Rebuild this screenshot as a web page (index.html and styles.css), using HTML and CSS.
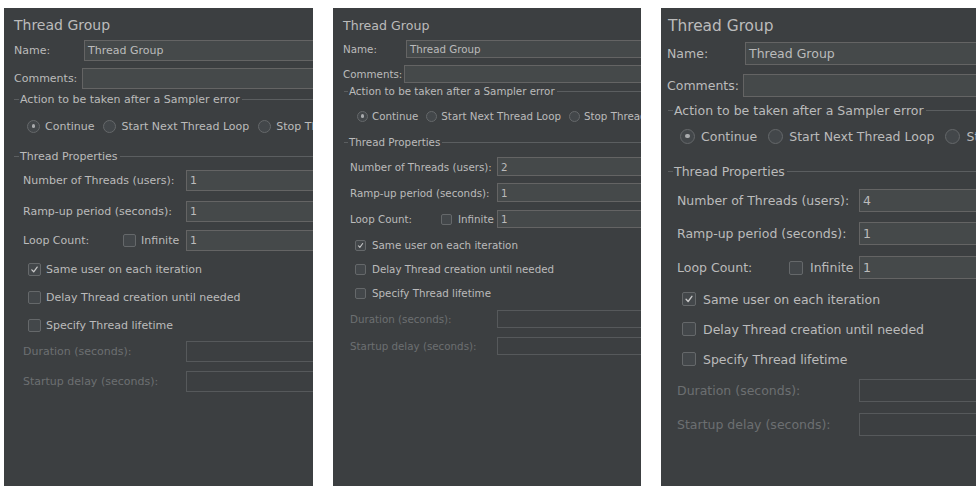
FILE: index.html
```html
<!DOCTYPE html>
<html>
<head>
<meta charset="utf-8">
<title>Thread Group</title>
<link rel="stylesheet" href="styles.css">
</head>
<body>
<section class="panel p1">
  <div class="title">Thread Group</div>
  <div class="row r-name"><span class="lbl lbl-name">Name:</span><div class="field">Thread Group</div></div>
  <div class="row r-comm"><span class="lbl lbl-comm">Comments:</span><div class="field"></div></div>
  <div class="hdr h-action"><i class="tick"></i><span class="hdr-text">Action to be taken after a Sampler error</span><i class="rule"></i></div>
  <div class="radios">
    <span class="opt"><span class="radio on"></span>Continue</span>
    <span class="opt"><span class="radio"></span>Start Next Thread Loop</span>
    <span class="opt"><span class="radio"></span>Stop Thread</span>
  </div>
  <div class="hdr h-props"><i class="tick"></i><span class="hdr-text">Thread Properties</span><i class="rule"></i></div>
  <div class="row prow r-num"><span class="lbl lbl-prop">Number of Threads (users):</span><div class="field">1</div></div>
  <div class="row prow r-ramp"><span class="lbl lbl-prop">Ramp-up period (seconds):</span><div class="field">1</div></div>
  <div class="row prow r-loop"><span class="lbl lbl-loop">Loop Count:</span><span class="inf"><span class="cb"></span>Infinite</span><div class="field">1</div></div>
  <div class="check r-same"><span class="cb"><svg viewBox="0 0 14 14"><path d="M3.6 7.4 L6 9.9 L10.4 3.9" fill="none" stroke="#c8c8c8" stroke-width="1.6" stroke-linecap="round" stroke-linejoin="round"/></svg></span>Same user on each iteration</div>
  <div class="check r-delay"><span class="cb"></span>Delay Thread creation until needed</div>
  <div class="check r-spec"><span class="cb"></span>Specify Thread lifetime</div>
  <div class="row prow dis r-dur"><span class="lbl lbl-prop">Duration (seconds):</span><div class="field"></div></div>
  <div class="row prow dis r-start"><span class="lbl lbl-prop">Startup delay (seconds):</span><div class="field"></div></div>
</section>

<section class="panel p2">
  <div class="title">Thread Group</div>
  <div class="row r-name"><span class="lbl lbl-name">Name:</span><div class="field">Thread Group</div></div>
  <div class="row r-comm"><span class="lbl lbl-comm">Comments:</span><div class="field"></div></div>
  <div class="hdr h-action"><i class="tick"></i><span class="hdr-text">Action to be taken after a Sampler error</span><i class="rule"></i></div>
  <div class="radios">
    <span class="opt"><span class="radio on"></span>Continue</span>
    <span class="opt"><span class="radio"></span>Start Next Thread Loop</span>
    <span class="opt"><span class="radio"></span>Stop Thread</span>
  </div>
  <div class="hdr h-props"><i class="tick"></i><span class="hdr-text">Thread Properties</span><i class="rule"></i></div>
  <div class="row prow r-num"><span class="lbl lbl-prop">Number of Threads (users):</span><div class="field">2</div></div>
  <div class="row prow r-ramp"><span class="lbl lbl-prop">Ramp-up period (seconds):</span><div class="field">1</div></div>
  <div class="row prow r-loop"><span class="lbl lbl-loop">Loop Count:</span><span class="inf"><span class="cb"></span>Infinite</span><div class="field">1</div></div>
  <div class="check r-same"><span class="cb"><svg viewBox="0 0 14 14"><path d="M3.6 7.4 L6 9.9 L10.4 3.9" fill="none" stroke="#c8c8c8" stroke-width="1.6" stroke-linecap="round" stroke-linejoin="round"/></svg></span>Same user on each iteration</div>
  <div class="check r-delay"><span class="cb"></span>Delay Thread creation until needed</div>
  <div class="check r-spec"><span class="cb"></span>Specify Thread lifetime</div>
  <div class="row prow dis r-dur"><span class="lbl lbl-prop">Duration (seconds):</span><div class="field"></div></div>
  <div class="row prow dis r-start"><span class="lbl lbl-prop">Startup delay (seconds):</span><div class="field"></div></div>
</section>

<section class="panel p3">
  <div class="title">Thread Group</div>
  <div class="row r-name"><span class="lbl lbl-name">Name:</span><div class="field">Thread Group</div></div>
  <div class="row r-comm"><span class="lbl lbl-comm">Comments:</span><div class="field"></div></div>
  <div class="hdr h-action"><i class="tick"></i><span class="hdr-text">Action to be taken after a Sampler error</span><i class="rule"></i></div>
  <div class="radios">
    <span class="opt"><span class="radio on"></span>Continue</span>
    <span class="opt"><span class="radio"></span>Start Next Thread Loop</span>
    <span class="opt"><span class="radio"></span>Stop Thread</span>
  </div>
  <div class="hdr h-props"><i class="tick"></i><span class="hdr-text">Thread Properties</span><i class="rule"></i></div>
  <div class="row prow r-num"><span class="lbl lbl-prop">Number of Threads (users):</span><div class="field">4</div></div>
  <div class="row prow r-ramp"><span class="lbl lbl-prop">Ramp-up period (seconds):</span><div class="field">1</div></div>
  <div class="row prow r-loop"><span class="lbl lbl-loop">Loop Count:</span><span class="inf"><span class="cb"></span>Infinite</span><div class="field">1</div></div>
  <div class="check r-same"><span class="cb"><svg viewBox="0 0 14 14"><path d="M3.6 7.4 L6 9.9 L10.4 3.9" fill="none" stroke="#c8c8c8" stroke-width="1.6" stroke-linecap="round" stroke-linejoin="round"/></svg></span>Same user on each iteration</div>
  <div class="check r-delay"><span class="cb"></span>Delay Thread creation until needed</div>
  <div class="check r-spec"><span class="cb"></span>Specify Thread lifetime</div>
  <div class="row prow dis r-dur"><span class="lbl lbl-prop">Duration (seconds):</span><div class="field"></div></div>
  <div class="row prow dis r-start"><span class="lbl lbl-prop">Startup delay (seconds):</span><div class="field"></div></div>
</section>
</body>
</html>
```
FILE: styles.css
```css
html, body {
  margin: 0;
  padding: 0;
  background: #ffffff;
}
body {
  display: flex;
  align-items: flex-start;
  gap: 20px;
  padding-left: 4px;
  height: 486px;
  overflow: hidden;
}

.panel {
  flex: none;
  box-sizing: border-box;
  height: 478px;
  margin-top: 8px;
  background: #3c3f41;
  color: #bbbbbb;
  font-family: "DejaVu Sans", "Noto Sans", sans-serif;
  font-size: var(--fs);
  padding-top: var(--pt);
  overflow: hidden;
}

/* ---- per-panel metrics ---- */
.p1 {
  width: 309px;
  --fs: 11px; --tfs: 14px; --th: 16px; --pt: 9px; --tx: 10px;
  --lx: 10px; --lwn: 70px; --lwc: 68px;
  --hx: 10px; --tk: 5px; --hh: 14px;
  --rx: 23px; --rg: 9px; --ric: 13px; --rig: 5px;
  --px: 19px; --lwp: 163px; --lwl: 100px;
  --cx: 24px; --cic: 13px; --cig: 5px;
  --m-name: 7px; --h-name: 21px;
  --m-comm: 7px; --h-comm: 21px;
  --m-act: 3px;
  --m-radio: 10px; --h-radio: 20px;
  --m-props: 13px;
  --m-num: 7px; --h-num: 21px;
  --m-ramp: 10px; --h-ramp: 21px;
  --m-loop: 8px; --h-loop: 21px;
  --m-same: 8px; --h-chk: 20px;
  --m-delay: 8px; --m-spec: 8px;
  --m-dur: 6px; --h-dur: 21px;
  --m-start: 9px; --h-start: 21px;
}
.p2 {
  width: 308px;
  --fs: 10.3px; --tfs: 12.6px; --th: 15px; --pt: 10px; --tx: 10px;
  --lx: 10px; --lwn: 63px; --lwc: 61px;
  --hx: 11px; --tk: 4px; --hh: 12px;
  --rx: 24px; --rg: 8px; --ric: 11px; --rig: 4px;
  --px: 17px; --lwp: 147px; --lwl: 91px;
  --cx: 22px; --cic: 11px; --cig: 6px;
  --m-name: 7px; --h-name: 18px;
  --m-comm: 7px; --h-comm: 18px;
  --m-act: 2px;
  --m-radio: 10px; --h-radio: 18px;
  --m-props: 11px;
  --m-num: 9px; --h-num: 19px;
  --m-ramp: 7px; --h-ramp: 19px;
  --m-loop: 8px; --h-loop: 18px;
  --m-same: 8px; --h-chk: 18px;
  --m-delay: 6px; --m-spec: 6px;
  --m-dur: 8px; --h-dur: 18px;
  --m-start: 9px; --h-start: 18px;
}
.p3 {
  width: 315px;
  --fs: 12.5px; --tfs: 15.4px; --th: 18px; --pt: 9px; --tx: 7px;
  --lx: 6px; --lwn: 78px; --lwc: 76px;
  --hx: 7px; --tk: 5px; --hh: 14px;
  --rx: 19px; --rg: 11px; --ric: 15px; --rig: 6px;
  --px: 16px; --lwp: 182px; --lwl: 112px;
  --cx: 21px; --cic: 14px; --cig: 7px;
  --m-name: 7px; --h-name: 23px;
  --m-comm: 9px; --h-comm: 23px;
  --m-act: 6px;
  --m-radio: 9px; --h-radio: 20px;
  --m-props: 18px;
  --m-num: 11px; --h-num: 23px;
  --m-ramp: 10px; --h-ramp: 23px;
  --m-loop: 11px; --h-loop: 23px;
  --m-same: 10px; --h-chk: 20px;
  --m-delay: 10px; --m-spec: 10px;
  --m-dur: 10px; --h-dur: 23px;
  --m-start: 11px; --h-start: 23px;
}

/* ---- title ---- */
.title {
  font-size: var(--tfs);
  height: var(--th);
  line-height: var(--th);
  padding-left: var(--tx);
  white-space: nowrap;
}

/* ---- label + field rows ---- */
.row {
  display: flex;
  align-items: center;
  margin-right: -40px;
  white-space: nowrap;
}
.lbl { flex: none; }
.r-name { padding-left: var(--lx); margin-top: var(--m-name); height: var(--h-name); }
.r-comm { padding-left: var(--lx); margin-top: var(--m-comm); height: var(--h-comm); }
.lbl-name { width: var(--lwn); }
.lbl-comm { width: var(--lwc); }

.prow { padding-left: var(--px); }
.lbl-prop { width: var(--lwp); }
.lbl-loop { width: var(--lwl); }
.r-num { margin-top: var(--m-num); height: var(--h-num); }
.r-ramp { margin-top: var(--m-ramp); height: var(--h-ramp); }
.r-loop { margin-top: var(--m-loop); height: var(--h-loop); }
.r-dur { margin-top: var(--m-dur); height: var(--h-dur); }
.r-start { margin-top: var(--m-start); height: var(--h-start); }

.inf {
  flex: none;
  display: flex;
  align-items: center;
  gap: var(--cig);
  width: calc(var(--lwp) - var(--lwl));
}

.field {
  flex: 1;
  align-self: stretch;
  box-sizing: border-box;
  display: flex;
  align-items: center;
  padding-left: 3px;
  background: #45494a;
  border: 1px solid #646464;
}
.dis .lbl { color: #6c6f71; }
.dis .field {
  background: transparent;
  border-color: #56595b;
}

/* ---- titled separators ---- */
.hdr {
  display: flex;
  align-items: center;
  height: var(--hh);
  padding-left: var(--hx);
  white-space: nowrap;
}
.h-action { margin-top: var(--m-act); }
.h-props { margin-top: var(--m-props); }
.tick, .rule {
  display: block;
  height: 1px;
  background: #5b5e60;
}
.tick { flex: none; width: var(--tk); }
.rule { flex: 1; }
.hdr-text { padding: 0 2px 0 1px; }

/* ---- radio buttons ---- */
.radios {
  display: flex;
  align-items: center;
  gap: var(--rg);
  padding-left: var(--rx);
  margin-top: var(--m-radio);
  height: var(--h-radio);
  white-space: nowrap;
}
.opt {
  flex: none;
  display: flex;
  align-items: center;
  gap: var(--rig);
}
.radio {
  flex: none;
  box-sizing: border-box;
  width: var(--ric);
  height: var(--ric);
  border-radius: 50%;
  border: 1px solid #65686a;
  background: #43474a;
  display: flex;
  align-items: center;
  justify-content: center;
}
.radio.on::after {
  content: "";
  width: 36%;
  height: 36%;
  border-radius: 50%;
  background: #a9abad;
}

/* ---- checkboxes ---- */
.check {
  display: flex;
  align-items: center;
  gap: var(--cig);
  padding-left: var(--cx);
  height: var(--h-chk);
  white-space: nowrap;
}
.r-same { margin-top: var(--m-same); }
.r-delay { margin-top: var(--m-delay); }
.r-spec { margin-top: var(--m-spec); }
.cb {
  flex: none;
  box-sizing: border-box;
  width: var(--cic);
  height: var(--cic);
  border: 1px solid #65686a;
  border-radius: 2px;
  background: #43474a;
  display: flex;
}
.cb svg { width: 100%; height: 100%; display: block; }
```
